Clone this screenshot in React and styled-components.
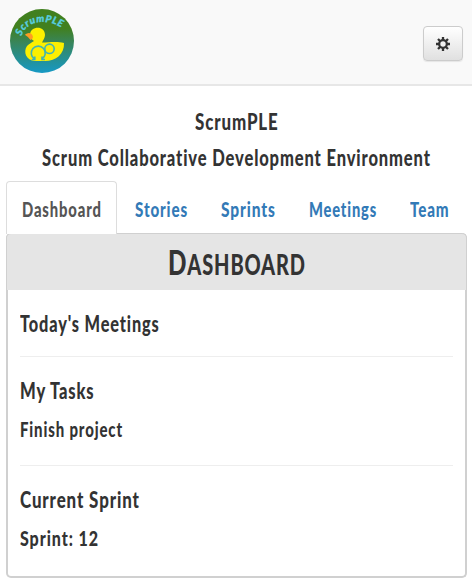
import React, { useLayoutEffect, useRef, useState } from "react";
import styled, { createGlobalStyle } from "styled-components";

const GlobalStyle = createGlobalStyle`
  * { box-sizing: border-box; }
  body {
    margin: 0;
    background: #fff;
    color: #333;
    font-family: Lato, "Open Sans", sans-serif;
    font-weight: 900;
    font-variant-ligatures: none;
  }
  h1, h2, h3, h4, p { margin: 0; font-size: inherit; font-weight: inherit; }
`;

const Slot = styled.span`
  display: block;
  flex: none;
  width: ${(p) => p.$width}px;
  height: ${(p) => p.$line}px;
  line-height: ${(p) => p.$line}px;
  font-size: ${(p) => p.$size}px;
  letter-spacing: 1.2px;
  white-space: nowrap;
`;

const Glyphs = styled.span`
  display: inline-block;
  vertical-align: top;
  transform-origin: 0 0;
  ${(p) =>
    p.$caps &&
    `text-transform: uppercase;
     &::first-letter { font-size: 34px; }`}
`;

/* Condenses a line of text to a given width. */
function Condensed({ width, size = 23, line = 26, caps, children }) {
  const ref = useRef(null);
  const [natural, setNatural] = useState(width + 1);
  useLayoutEffect(() => {
    setNatural(ref.current.offsetWidth);
  }, [width]);
  return (
    <Slot $width={width} $size={size} $line={line}>
      <Glyphs
        ref={ref}
        $caps={caps}
        style={{ transform: `scaleX(${width / (natural - 1)})`, marginRight: width - natural }}
      >
        {children}
      </Glyphs>
    </Slot>
  );
}

const Navbar = styled.header`
  height: 86px;
  padding: 9px 9px 0 10px;
  display: flex;
  justify-content: space-between;
  align-items: flex-start;
  background: #f9f9f9;
  border-bottom: 2px solid #e7e7e7;
`;

const LogoImage = styled.svg`
  display: block;
  width: 64px;
  height: 64px;
`;

const SettingsButton = styled.button`
  width: 40px;
  height: 35px;
  margin-top: 17px;
  padding: 0;
  display: flex;
  align-items: center;
  justify-content: center;
  border: 1px solid #ccc;
  border-radius: 4px;
  background: linear-gradient(#fff, #e0e0e0);
  box-shadow: 0 1px 1px rgba(0, 0, 0, 0.08);
`;

const Heading = styled.div`
  padding-top: 22px;
  height: 95px;
  display: flex;
  flex-direction: column;
  align-items: center;
  gap: 10px;
  overflow: hidden;
`;

const Tabs = styled.nav`
  height: 53px;
  margin: 0 6px -1px;
  display: flex;
  gap: 2px;
  position: relative;
`;

const Tab = styled.a`
  height: 53px;
  padding: 14px 15px 0;
  border: 1px solid ${(p) => (p.$active ? "#ddd" : "transparent")};
  border-bottom: 0;
  border-radius: 4px 4px 0 0;
  background: ${(p) => (p.$active ? "#fff" : "transparent")};
  color: ${(p) => (p.$active ? "#555" : "#337ab7")};
`;

const Panel = styled.main`
  height: 345px;
  margin: 0 5px 0 6px;
  border: 2px solid #d0d0d0;
  border-top-width: 0;
  border-radius: 5px;
`;

const PanelHeader = styled.div`
  height: 57px;
  margin: 0 -2px;
  padding-top: 7px;
  display: flex;
  justify-content: center;
  background: #e5e5e5;
  border: 1px solid #d0d0d0;
  border-bottom: 0;
  border-radius: 5px 5px 0 0;
`;

const Section = styled.section`
  height: ${(p) => p.$height}px;
  margin: 0 12px;
  padding-top: ${(p) => p.$top}px;
  display: flex;
  flex-direction: column;
  gap: 13px;
  border-bottom: ${(p) => (p.$last ? "0" : "1px solid #eee")};
`;

function Logo() {
  return (
    <LogoImage viewBox="0 0 64 64" role="img" aria-label="ScrumPLE">
      <defs>
        <linearGradient id="pond" x1="0" y1="0" x2="0" y2="1">
          <stop offset="0.3" stopColor="#41801f" />
          <stop offset="0.52" stopColor="#38855a" />
          <stop offset="1" stopColor="#1699c5" />
        </linearGradient>
        <path id="arc" d="M11.5 27 C16 12 36 8 54 20" />
      </defs>
      <circle cx="32" cy="32" r="32" fill="url(#pond)" />
      <text fill="#58cfe0" stroke="#58cfe0" strokeWidth="0.3" fontFamily="Lato, sans-serif" fontSize="10" fontWeight="900" fontStyle="italic">
        <textPath href="#arc" textLength="47">ScrumPLE</textPath>
      </text>
      <path
        d="M20 26 C20 17 35 16 35 26 C35 29 33 31 32 33.5 C39 33.5 47 32 54 34 C54.5 45 46 52 35 52 H25 C16 51.5 13 43 17 37 C19 34.5 22 33.5 24 32 C21.5 30 20 29 20 26Z"
        fill="#fcef00"
      />
      <path d="M14.8 25.8 Q19 22.5 22 25.5 Q24.5 29 20.5 31 Q18.5 28 14.8 25.8Z" fill="#ff9c22" />
      <g fill="none" stroke="#44b3b0" strokeWidth="1.6">
        <path d="M24.5 50 A7 7 0 1 1 32 50" />
        <circle cx="39.5" cy="39.8" r="4.7" />
        <path d="M21.8 50.5 H24.8 V47.5 M35 50.5 H32 V47.5" />
      </g>
    </LogoImage>
  );
}

function Gear() {
  return (
    <svg width="14" height="14" viewBox="0 0 14 14" aria-hidden="true">
      <g stroke="#333" strokeWidth="2.3">
        <path d="M7 0V14M0 7H14M2 2L12 12M12 2L2 12" />
      </g>
      <circle cx="7" cy="7" r="4.9" fill="#333" />
      <circle cx="7" cy="7" r="2.7" fill="#f1f1f1" />
    </svg>
  );
}

const tabs = [
  { label: "Dashboard", width: 79, active: true },
  { label: "Stories", width: 52 },
  { label: "Sprints", width: 54 },
  { label: "Meetings", width: 67 },
  { label: "Team", width: 39 },
];

export default function App() {
  return (
    <>
      <GlobalStyle />
      <Navbar>
        <Logo />
        <SettingsButton aria-label="Settings"><Gear /></SettingsButton>
      </Navbar>
      <Heading>
        <h1><Condensed width={83}>ScrumPLE</Condensed></h1>
        <h2><Condensed width={388}>Scrum Collaborative Development Environment</Condensed></h2>
      </Heading>
      <Tabs>
        {tabs.map((t) => (
          <Tab key={t.label} $active={t.active}>
            <Condensed width={t.width} size={21}>{t.label}</Condensed>
          </Tab>
        ))}
      </Tabs>
      <Panel>
        <PanelHeader>
          <Condensed width={137} size={28} line={42} caps>Dashboard</Condensed>
        </PanelHeader>
        <Section $height={67} $top={20}>
          <h3><Condensed width={139}>Today's Meetings</Condensed></h3>
        </Section>
        <Section $height={109} $top={20}>
          <h3><Condensed width={74}>My Tasks</Condensed></h3>
          <p><Condensed width={102} size={21}>Finish project</Condensed></p>
        </Section>
        <Section $height={110} $top={20} $last>
          <h3><Condensed width={119}>Current Sprint</Condensed></h3>
          <p><Condensed width={78} size={21}>Sprint: 12</Condensed></p>
        </Section>
      </Panel>
    </>
  );
}
